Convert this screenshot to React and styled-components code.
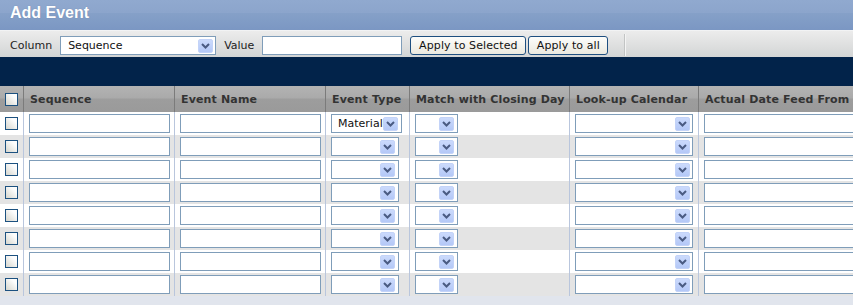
import React from 'react'
import styled, { createGlobalStyle } from 'styled-components'

const Global = createGlobalStyle`
    body {
        margin: 0;
        font-family: "DejaVu Sans", Verdana, sans-serif;
        font-size: 11px;
    }
`

const Page = styled.div`
    width: 853px;
    height: 305px;
    overflow: hidden;
    background: #e1e5ed;
    display: flex;
    flex-direction: column;
`

const TitleBar = styled.div`
    height: 30px;
    box-sizing: border-box;
    padding: 4px 10px 0;
    background: linear-gradient(#90a9cf 0%, #8ca5cc 42%, #85a0c8 45%, #7b97c3 100%);
    color: #fff;
    font-family: "Liberation Sans", Arial, sans-serif;
    font-weight: bold;
    font-size: 16px;
    line-height: 18px;
    text-shadow: 0 0 1px rgba(60, 80, 120, 0.4);
`

const Toolbar = styled.div`
    height: 27px;
    box-sizing: border-box;
    border-top: 1px solid #f2f3f4;
    padding: 5px 10px 0;
    background: linear-gradient(#ececec, #d3d5d5);
    display: flex;
    align-items: flex-start;
    color: #222;
`

const Label = styled.span`
    line-height: 19px;
    margin-right: 8px;
`

const TextBox = styled.input`
    box-sizing: border-box;
    width: ${p => p.$w}px;
    height: 19px;
    margin: 0 ${p => p.$mr || 0}px 0 0;
    border: 1px solid #7f9db9;
    background: #fff;
    padding: 0 3px;
    font: inherit;
    outline: none;
`

const Combo = styled.div`
    box-sizing: border-box;
    width: ${p => p.$w}px;
    height: 19px;
    margin-right: ${p => p.$mr || 0}px;
    border: 1px solid #7f9db9;
    background: #fff;
    display: flex;
    align-items: center;
    padding: 0 ${p => p.$pr ?? 3}px 0 ${p => p.$pl ?? 7}px;
    color: #111;
`

const ComboText = styled.span`
    flex: 1;
    white-space: nowrap;
    overflow: hidden;
`

const Arrow = styled.span`
    width: 15px;
    height: 14px;
    box-sizing: border-box;
    border: 1px solid #c3d3f8;
    border-radius: 2px;
    background: linear-gradient(#cbdafc, #b4c8f7);
    display: flex;
    align-items: center;
    justify-content: center;
`

const Button = styled.button`
    box-sizing: border-box;
    height: 19px;
    width: ${p => p.$w}px;
    margin-right: ${p => p.$mr || 0}px;
    border: 1px solid #1e4f80;
    border-radius: 3px;
    background: linear-gradient(#fdfdfb, #ebe9df);
    font: inherit;
    color: #111;
    padding: 0;
    letter-spacing: 0.1px;
`

const Divider = styled.span`
    width: 1px;
    height: 22px;
    margin: -2px 0 0 16px;
    background: #c2c4c4;
    box-shadow: 1px 0 0 #f4f4f4;
`

const Band = styled.div`
    height: 29px;
    background: #02234a;
`

const cols = '23px 151px 151px 84px 160px 129px 200px'

const HeadRow = styled.div`
    display: grid;
    grid-template-columns: ${cols};
    height: 26px;
    background: linear-gradient(#b3b3b3 0%, #aaaaaa 46%, #9d9d9d 50%, #9a9a9a 100%);
`

const HeadCell = styled.div`
    display: flex;
    align-items: center;
    justify-content: ${p => (p.$center ? 'center' : 'flex-start')};
    padding-left: ${p => (p.$center ? 0 : 6)}px;
    border-left: ${p => (p.$first ? 'none' : '1px solid #7b7b7b')};
    font-weight: bold;
    color: #333;
    white-space: nowrap;
    letter-spacing: 0.15px;
`

const Row = styled.div`
    display: grid;
    grid-template-columns: ${cols};
    height: 23px;
    background: ${p => (p.$alt ? '#e4e4e4' : '#fff')};
`

const Cell = styled.div`
    display: flex;
    align-items: center;
    justify-content: ${p => (p.$center ? 'center' : 'flex-start')};
    padding-left: ${p => (p.$center ? 0 : 5)}px;
    border-left: ${p => (p.$first ? 'none' : '1px solid #b9c6dd')};
`

const Check = styled.span`
    width: 13px;
    height: 13px;
    box-sizing: border-box;
    border: 1px solid #1c5180;
    background: linear-gradient(45deg, #d6d6ce, #fdfdfd 75%);
`

const Chevron = () => (
    <svg width="9" height="6" viewBox="0 0 9 6">
        <polyline points="1,1 4.5,4.5 8,1" fill="none" stroke="#4a5b82" strokeWidth="2" />
    </svg>
)

const Select = ({ w, value, mr, pl, pr }) => (
    <Combo $w={w} $mr={mr} $pl={pl} $pr={pr}>
        <ComboText>{value}</ComboText>
        <Arrow><Chevron /></Arrow>
    </Combo>
)

const headers = ['Sequence', 'Event Name', 'Event Type', 'Match with Closing Day', 'Look-up Calendar', 'Actual Date Feed From']

export const App = () => {
    const rows = Array.from({ length: 8 }, (_, i) => i)

    return (
        <Page>
            <Global />
            <TitleBar>Add Event</TitleBar>
            <Toolbar>
                <Label>Column</Label>
                <Select w={156} value="Sequence" mr={8} pr={2} />
                <Label>Value</Label>
                <TextBox $w={140} $mr={8} />
                <Button $w={116} $mr={2}>Apply to Selected</Button>
                <Button $w={80}>Apply to all</Button>
                <Divider />
            </Toolbar>
            <Band />
            <HeadRow>
                <HeadCell $first $center><Check /></HeadCell>
                {headers.map(h => <HeadCell key={h}>{h}</HeadCell>)}
            </HeadRow>
            {rows.map(i => (
                <Row key={i} $alt={i % 2 === 1}>
                    <Cell $first $center><Check /></Cell>
                    <Cell><TextBox $w={141} /></Cell>
                    <Cell><TextBox $w={141} /></Cell>
                    <Cell>
                        {i === 0
                            ? <Select w={71} value="Material" pl={6} pr={3} />
                            : <Select w={68} value="" pr={3} />}
                    </Cell>
                    <Cell><Select w={43} value="" pr={3} /></Cell>
                    <Cell><Select w={118} value="" pr={2} /></Cell>
                    <Cell><TextBox $w={170} /></Cell>
                </Row>
            ))}
        </Page>
    )
}

export default App
